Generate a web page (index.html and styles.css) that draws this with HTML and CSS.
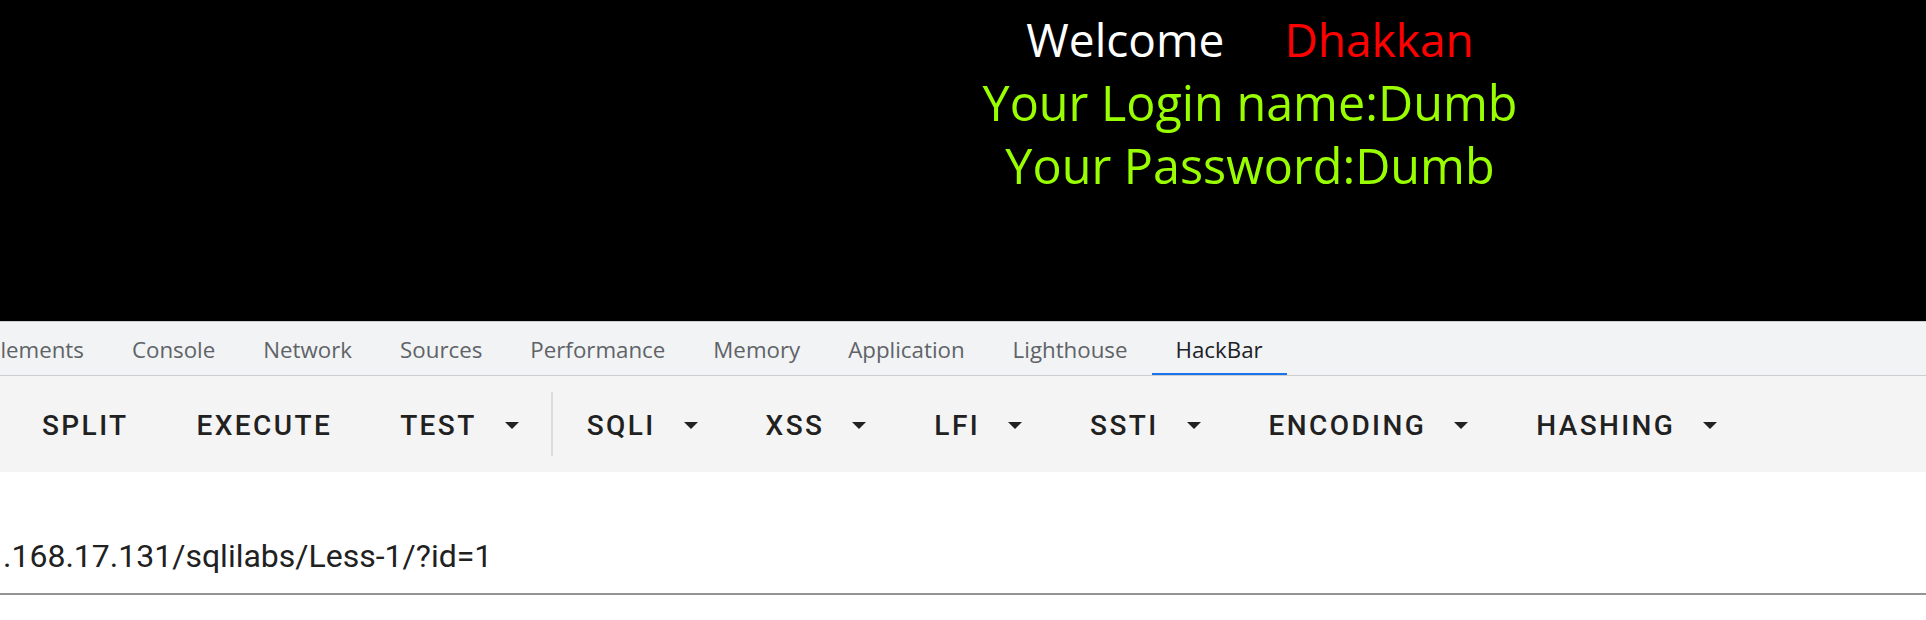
FILE: index.html
```html
<!DOCTYPE html>
<html>
<head>
<meta charset="utf-8">
<link rel="stylesheet" href="styles.css">
</head>
<body>
<div class="site">
  <div class="welcome-block">
    <div class="welcome">Welcome<span class="name">Dhakkan</span></div>
    <div class="info">Your Login name:Dumb</div>
    <div class="info">Your Password:Dumb</div>
  </div>
</div>
<div class="devtools">
  <div class="tabs">
    <div class="tab">Elements</div>
    <div class="tab">Console</div>
    <div class="tab">Network</div>
    <div class="tab">Sources</div>
    <div class="tab">Performance</div>
    <div class="tab">Memory</div>
    <div class="tab">Application</div>
    <div class="tab">Lighthouse</div>
    <div class="tab active">HackBar</div>
  </div>
  <div class="toolbar">
    <div class="btn">SPLIT</div>
    <div class="btn">EXECUTE</div>
    <div class="btn before-divider">TEST<svg class="arrow" viewBox="0 0 10 5"><path d="M0 0l5 5 5-5z"/></svg></div>
    <div class="divider"></div>
    <div class="btn">SQLI<svg class="arrow" viewBox="0 0 10 5"><path d="M0 0l5 5 5-5z"/></svg></div>
    <div class="btn">XSS<svg class="arrow" viewBox="0 0 10 5"><path d="M0 0l5 5 5-5z"/></svg></div>
    <div class="btn">LFI<svg class="arrow" viewBox="0 0 10 5"><path d="M0 0l5 5 5-5z"/></svg></div>
    <div class="btn">SSTI<svg class="arrow" viewBox="0 0 10 5"><path d="M0 0l5 5 5-5z"/></svg></div>
    <div class="btn">ENCODING<svg class="arrow" viewBox="0 0 10 5"><path d="M0 0l5 5 5-5z"/></svg></div>
    <div class="btn">HASHING<svg class="arrow" viewBox="0 0 10 5"><path d="M0 0l5 5 5-5z"/></svg></div>
  </div>
  <div class="url-area">
    <div class="field">.168.17.131/sqlilabs/Less-1/?id=1</div>
  </div>
</div>
</body>
</html>
```
FILE: styles.css
```css
html, body {
  margin: 0;
  padding: 0;
  overflow: hidden;
}
body {
  width: 1926px;
  height: 620px;
  background: #fff;
}
.site {
  height: 321px;
  background: #000;
  padding-top: 8px;
  box-sizing: border-box;
}
.welcome-block {
  width: 700px;
  margin-left: 900px;
  text-align: center;
  font-family: "Open Sans", sans-serif;
}
.welcome {
  color: #fff;
  font-size: 46px;
  line-height: 63px;
}
.name {
  color: #ff0000;
  margin-left: 60px;
}
.info {
  color: #99ff00;
  font-size: 48.5px;
  line-height: 62.5px;
}
.devtools {
  overflow: hidden;
}
.tabs {
  display: flex;
  height: 53px;
  margin-left: -36px;
  background: #f1f3f4;
  border-top: 1px solid #cbcdd1;
  border-bottom: 1px solid #cbcdd1;
}
.tab {
  display: flex;
  align-items: center;
  padding: 1px 24px 0;
  font-family: "Open Sans", sans-serif;
  font-size: 22.3px;
  color: #5f6368;
  white-space: nowrap;
}
.tab.active {
  color: #202124;
  box-shadow: inset 0 -2px 0 #1a73e8;
}
.toolbar {
  display: flex;
  align-items: center;
  height: 96px;
  padding-left: 8px;
  background: #f4f4f4;
}
.btn {
  display: flex;
  align-items: center;
  padding: 2px 34px 0;
  font-family: Roboto, sans-serif;
  font-weight: 500;
  font-size: 28px;
  letter-spacing: 2.4px;
  color: #212121;
  white-space: nowrap;
}
.btn.before-divider {
  padding-right: 32px;
}
.arrow {
  width: 14px;
  height: 7px;
  margin-left: 28px;
  fill: #212121;
}
.divider {
  width: 2px;
  height: 64px;
  background: #dcdcdc;
}
.url-area {
  padding-top: 64px;
  background: #fff;
}
.field {
  padding: 0 0 17px 3px;
  font-family: Roboto, sans-serif;
  font-size: 32px;
  line-height: 40px;
  color: #212121;
  border-bottom: 2px solid #949494;
  white-space: nowrap;
}
```
